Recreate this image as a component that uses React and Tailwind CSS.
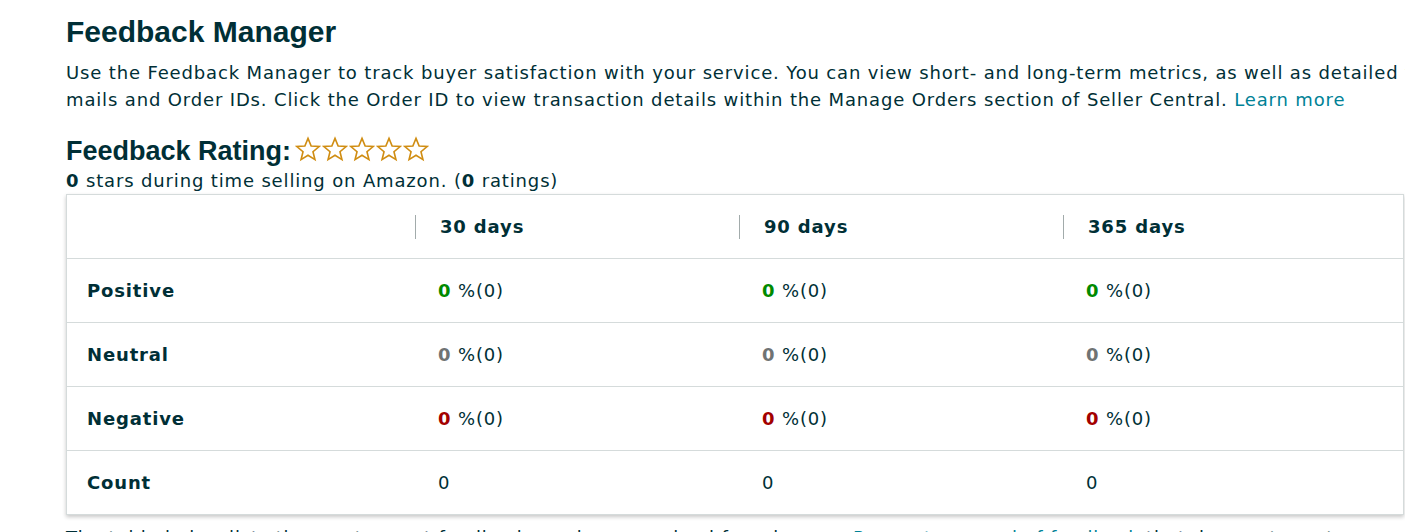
import React from 'react';

const body = "font-['DejaVu_Sans',Verdana,sans-serif]";
const head = "font-['Liberation_Sans',Arial,sans-serif]";

const periods = ['30 days', '90 days', '365 days'];

const rows = [
  { label: 'Positive', tone: 'text-[#008a00]' },
  { label: 'Neutral', tone: 'text-[#6f7373]' },
  { label: 'Negative', tone: 'text-[#a30000]' },
];

function Star() {
  return (
    <svg viewBox="0 0 24 24" className="w-[26px] h-[26px]" fill="none" stroke="#d08d12" strokeWidth="1.5" strokeLinejoin="miter">
      <path d="M12 2.2l2.9 7 7.4.5-5.7 4.8 1.8 7.3L12 17.8l-6.4 4 1.8-7.3L1.7 9.7l7.4-.5z" />
    </svg>
  );
}

function Cell({ children, first }) {
  return (
    <div className={first ? 'pl-[20px] flex items-center font-bold' : 'pl-[23px] flex items-center'}>
      {children}
    </div>
  );
}

export default function App() {
  return (
    <div className={`w-full h-[532px] overflow-hidden bg-white text-[#002f36] ${body} tracking-[0.85px]`}>
      <div className="w-[1800px] pl-[66px] pt-[13px]">
        <h1 className={`${head} text-[30px] font-bold leading-[38px] tracking-normal`}>Feedback Manager</h1>
        <p className="mt-[8px] text-[18px] leading-[27px] whitespace-nowrap">
          Use the Feedback Manager to track buyer satisfaction with your service. You can view short- and long-term metrics, as well as detailed feedback entries, including buyer e-
          <br />
          mails and Order IDs. Click the Order ID to view transaction details within the Manage Orders section of Seller Central.{' '}
          <a className="text-[#008296]">Learn more</a>
        </p>

        <div className="mt-[22px] flex items-center h-[32px]">
          <h2 className={`${head} text-[27px] font-bold leading-[32px] tracking-normal`}>Feedback Rating:</h2>
          <div className="ml-[4px] flex gap-[1px] -mt-[4px]">
            <Star />
            <Star />
            <Star />
            <Star />
            <Star />
          </div>
        </div>
        <p className="text-[18px] leading-[24px] mt-[2px]">
          <b>0</b> stars during time selling on Amazon. (<b>0</b> ratings)
        </p>

        <div className="mt-[1px] w-[1338px] border border-[#d5dbdb] shadow-[0_2px_4px_rgba(0,0,0,0.22)] text-[18px]">
          <div className="grid grid-cols-[348px_324px_324px_1fr] h-[63px] font-bold">
            <div />
            {periods.map((p) => (
              <div key={p} className="flex items-center">
                <span className="w-px h-[24px] bg-[#a2abab]" />
                <span className="pl-[24px]">{p}</span>
              </div>
            ))}
          </div>
          {rows.map((r) => (
            <div key={r.label} className="grid grid-cols-[348px_324px_324px_1fr] h-[64px] border-t border-[#d5dbdb]">
              <Cell first>{r.label}</Cell>
              {periods.map((p) => (
                <Cell key={p}>
                  <b className={r.tone}>0</b>&nbsp;%(0)
                </Cell>
              ))}
            </div>
          ))}
          <div className="grid grid-cols-[348px_324px_324px_1fr] h-[64px] border-t border-[#d5dbdb]">
            <Cell first>Count</Cell>
            <Cell>0</Cell>
            <Cell>0</Cell>
            <Cell>0</Cell>
          </div>
        </div>

        <p className="mt-[9px] text-[18px] leading-[27px] whitespace-nowrap">
          The table below lists the most recent feedback you have received from buyers. <a className="text-[#008296]">Request removal of feedback</a> that does not meet our guidelines, or respond to buyers directly.
        </p>
      </div>
    </div>
  );
}
